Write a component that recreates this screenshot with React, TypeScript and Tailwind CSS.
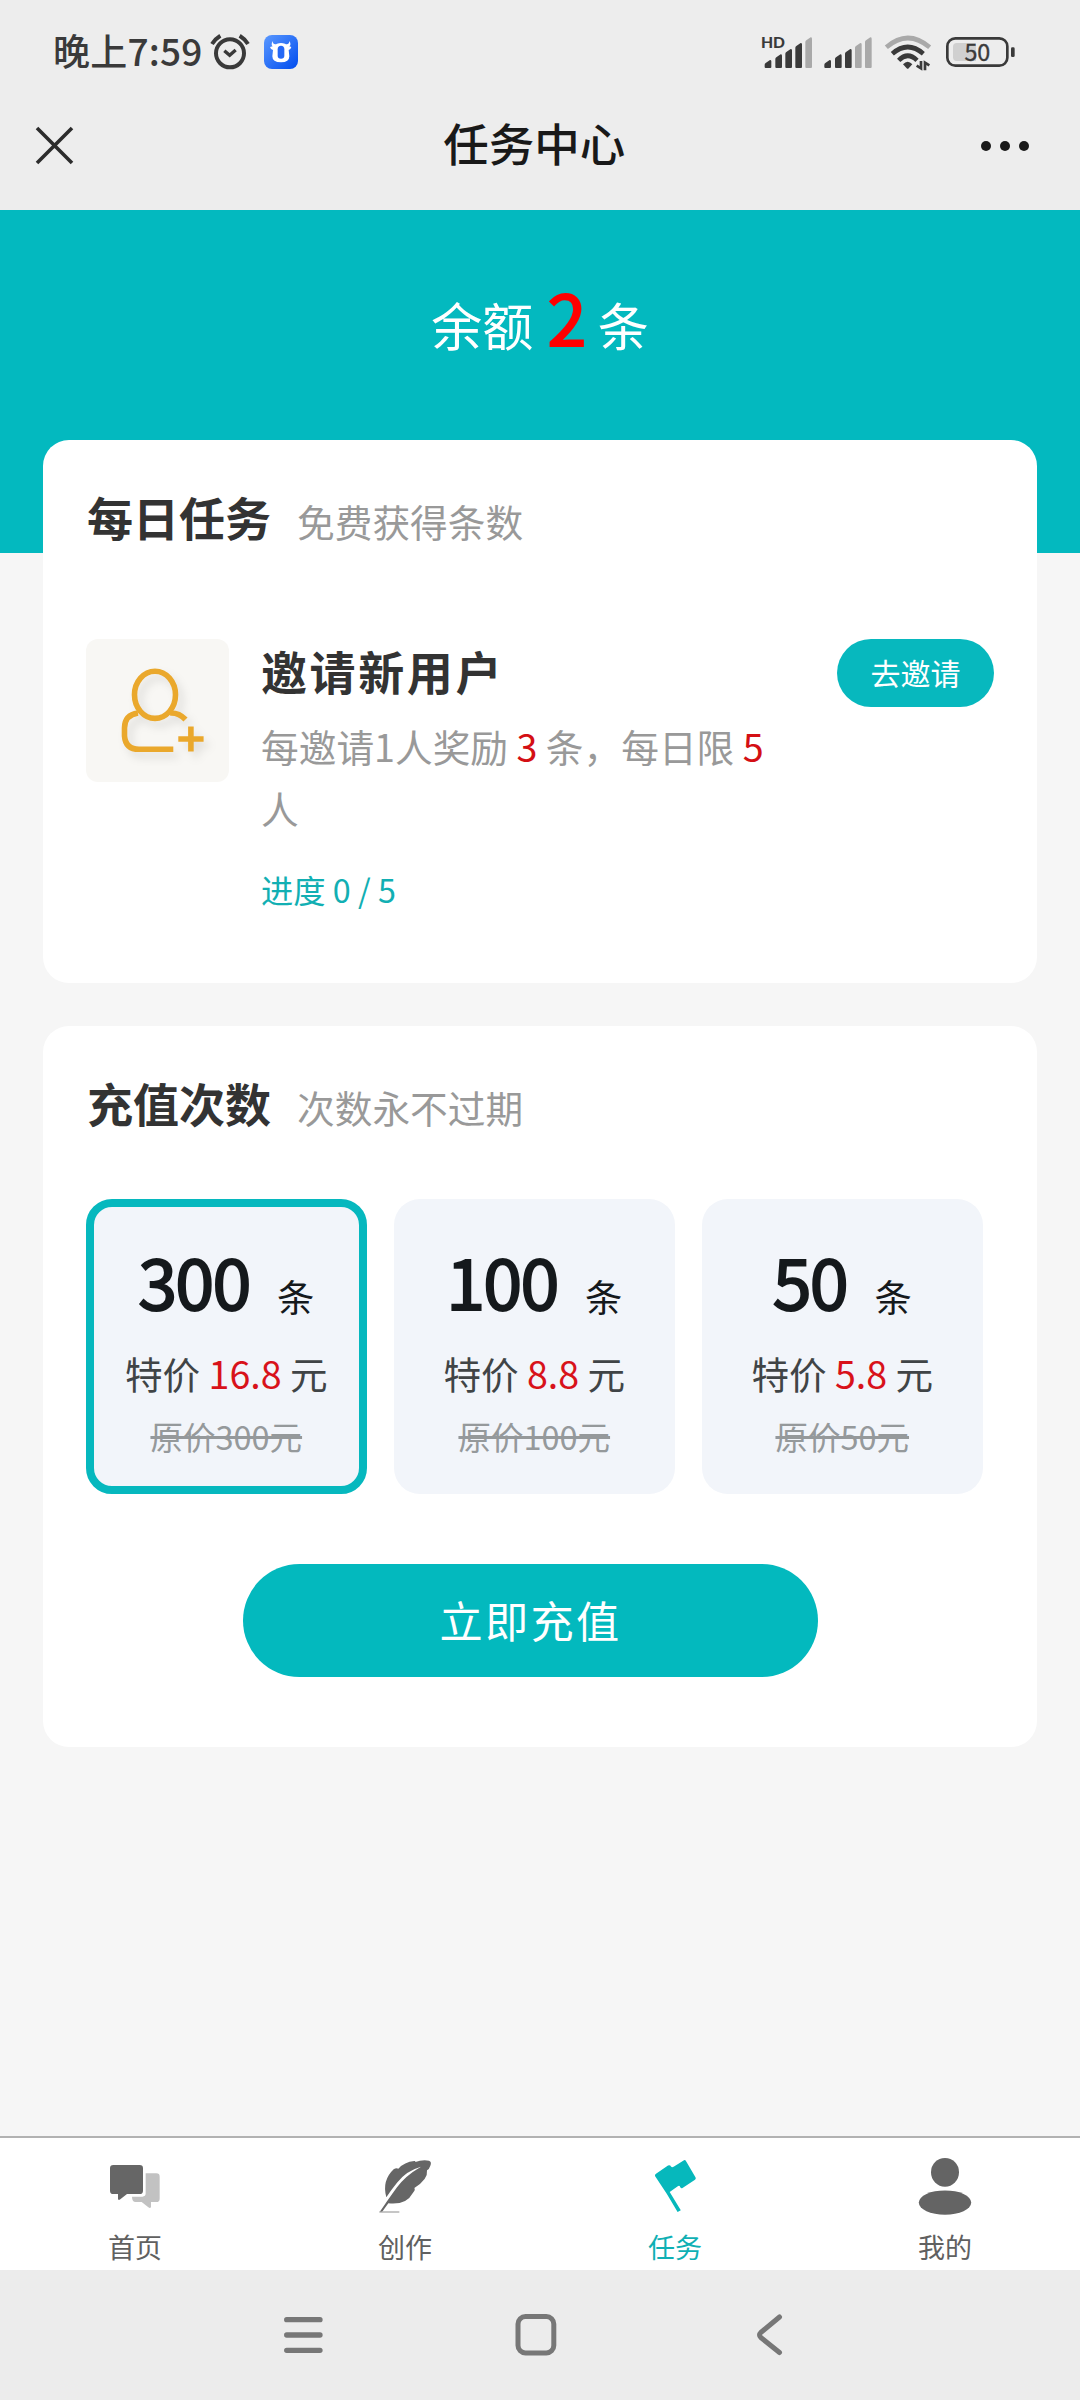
import React from "react";

const plans = [
  { count: "300", price: "16.8", original: "原价300元", selected: true },
  { count: "100", price: "8.8", original: "原价100元", selected: false },
  { count: "50", price: "5.8", original: "原价50元", selected: false },
];

function AlarmIcon() {
  return (
    <svg width="42" height="40" viewBox="0 0 126 120" fill="none" stroke="#3a3a3a" strokeWidth="12">
      <circle cx="63" cy="64" r="42" />
      <path d="M9 36 Q19 20 34 11M92 11 Q107 20 117 36" strokeWidth="12" />
      <path d="M46 56 L62 70 L80 54" strokeWidth="10" />
    </svg>
  );
}

function CowAppIcon() {
  return (
    <svg width="34" height="34" viewBox="0 0 102 102">
      <defs>
        <linearGradient id="cow" x1="0" y1="0" x2="1" y2="1">
          <stop offset="0" stopColor="#5a98ff" />
          <stop offset="1" stopColor="#004cee" />
        </linearGradient>
      </defs>
      <rect width="102" height="102" rx="24" fill="url(#cow)" />
      <path
        d="M26 18 C26 27 33 30 39 26 Q51 22 63 26 C69 30 76 27 76 18 C81 25 80 31 76 34 L82 36 Q80 44 74 45 L76 64 Q76 82 51 82 Q25 82 25 64 L27 45 Q20 44 18 36 L26 34 C22 31 22 25 26 18Z"
        fill="#fff"
      />
      <path d="M51 32 Q61 32 61 43 L61 62 Q61 71 51 71 Q41 71 41 62 L41 43 Q41 32 51 32Z" fill="#2468f5" />
    </svg>
  );
}

function SignalBars({ x, strong }: { x: number; strong: number }) {
  const bars = [
    [0, 180],
    [32, 163],
    [62, 147],
    [92, 129],
    [122, 112],
  ];
  return (
    <>
      {bars.map(([dx, top], i) => (
        <path
          key={dx}
          transform={`translate(${x + dx} 0)`}
          d={`M3 ${top + 9} L16 ${top} Q20 ${top} 20 ${top + 4} V201 Q20 204 17 204 H3 Q0 204 0 201 V${top + 14} Q0 ${top + 11} 3 ${top + 9}Z`}
          fill={i < strong ? "#3a3a3a" : "#a9a9a9"}
        />
      ))}
    </>
  );
}

function StatusIcons() {
  return (
    <svg width="257" height="42" viewBox="120 93 771 126" fill="none">
      <text x="123" y="143" fontSize="47" fontWeight="900" fill="#3a3a3a" fontFamily="Lato, 'Open Sans', sans-serif">
        HD
      </text>
      <SignalBars x={134} strong={4} />
      <SignalBars x={313} strong={3} />
      <path d="M499 142 Q563 86 629 142" stroke="#a9a9a9" strokeWidth="14" />
      <path d="M517 161 Q563 121 610 161" stroke="#3a3a3a" strokeWidth="14" />
      <path d="M536 181 Q563 154 591 181" stroke="#3a3a3a" strokeWidth="14" />
      <path d="M549 193 Q563 178 577 193 L566 205 Q563 208 560 205Z" fill="#3a3a3a" />
      <path d="M603 183 V205 L590 197 M615 211 V188 L628 196" stroke="#3a3a3a" strokeWidth="8" />
      <rect x="682" y="115" width="180" height="82" rx="24" stroke="#3a3a3a" strokeWidth="8" />
      <path d="M710 129 H768 V183 H710 Q699 183 699 172 V140 Q699 129 710 129Z" fill="#d0d0d0" />
      <rect x="873" y="142" width="11" height="29" rx="4" fill="#3a3a3a" />
      <text
        x="772"
        y="183"
        fontSize="70"
        fill="#3a3a3a"
        stroke="#3a3a3a"
        strokeWidth="1"
        textAnchor="middle"
        fontFamily="'Noto Sans CJK SC', sans-serif"
      >
        50
      </text>
    </svg>
  );
}

function InviteIcon() {
  return (
    <svg
      width="143"
      height="143"
      viewBox="0 0 143 143"
      fill="none"
      stroke="#eaa82c"
      strokeWidth="5.6"
      className="drop-shadow-[5px_6px_4px_rgba(0,0,0,0.1)]"
    >
      <ellipse cx="69" cy="55.8" rx="20.5" ry="23.6" />
      <path d="M52 74 Q38.5 76 38.5 89 V97 Q39.5 110.3 53 110.3 H87.3" />
      <path d="M84 74 Q93 73.5 99.5 80.5" />
      <path d="M92.3 100 H117.6 M104.9 87.4 V112.6" />
    </svg>
  );
}

function ChatIcon() {
  return (
    <svg width="56" height="60" viewBox="0 0 168 180">
      <path
        d="M116 52 H148 Q158 52 158 62 V128 Q158 138 148 138 H132 V153 Q130 158 124 154 L104 138 H86 Q75 138 75 122 H106 Q116 122 116 112Z"
        fill="#c2c2c2"
      />
      <path d="M19 27 H98 Q108 27 108 37 V104 Q108 114 98 114 H60 L38 131 Q33 133 33 128 V114 H19 Q9 114 9 104 V37 Q9 27 19 27Z" fill="#666" />
    </svg>
  );
}

function FeatherIcon() {
  return (
    <svg width="56" height="60" viewBox="0 0 168 180" fill="none">
      <path
        d="M8 168 L30 136 Q44 116 60 94 Q84 60 132 32 Q88 44 60 80 Q42 102 28 124 Q14 74 50 40 Q58 34 64 38 Q82 18 112 15 Q116 14 115 18 Q134 11 156 14 Q165 17 160 29 Q156 41 150 43 Q154 70 112 96 Q116 102 108 110 Q88 148 34 142 L15 168Z"
        fill="#666"
      />
      <path d="M7 168 H67" stroke="#aaa" strokeWidth="4" />
    </svg>
  );
}

function FlagIcon() {
  return (
    <svg width="56" height="60" viewBox="0 0 56 60">
      <path
        d="M8 20 Q7.6 18.6 9 17.7 L21 9.6 Q23 8.6 24 10.5 Q25 11.8 27 10.4 L37 4.2 Q38.2 3.7 38.8 4.8 L48.6 21.5 Q49.2 22.7 48 23.7 L35.5 32 Q34 32.8 33.2 31 Q32.5 29 30.8 30.2 L22.7 36 L33.8 54.3 L30.6 56 Q20.5 38 8 20Z"
        fill="#06b8bc"
      />
    </svg>
  );
}

function PersonIcon() {
  return (
    <svg width="56" height="60" viewBox="0 0 56 60" fill="#646464">
      <ellipse cx="28" cy="16.3" rx="14" ry="14.4" />
      <ellipse cx="28" cy="46.6" rx="26.2" ry="12.2" />
    </svg>
  );
}

const tabs = [
  { label: "首页", icon: <ChatIcon />, active: false },
  { label: "创作", icon: <FeatherIcon />, active: false },
  { label: "任务", icon: <FlagIcon />, active: true },
  { label: "我的", icon: <PersonIcon />, active: false },
];

function CardHeading({ title, note }: { title: string; note: string }) {
  return (
    <div className="flex h-[60px] items-start gap-[26px] pl-px">
      <h2 className="text-[46px] leading-[60px] font-bold text-[#333]">{title}</h2>
      <span className="text-[37.7px] leading-[69px] text-[#999]">{note}</span>
    </div>
  );
}

export default function App() {
  return (
    <div className="flex h-[2400px] w-[1080px] flex-col overflow-hidden bg-[#f6f6f6] font-['Noto_Sans_CJK_SC',sans-serif]">
      <header className="h-[210px] shrink-0 bg-[#ededed]">
        <div className="flex h-[100px] items-center justify-between pr-[63px] pl-[53px]">
          <div className="flex items-center">
            <span className="text-[37px] leading-[98px] font-medium tracking-[0.2px] text-[#3a3a3a]">晚上7:59</span>
            <div className="ml-[6px] flex items-center gap-[13px] pt-[4px]">
              <AlarmIcon />
              <CowAppIcon />
            </div>
          </div>
          <div className="pt-[4px]">
            <StatusIcons />
          </div>
        </div>
        <div className="flex h-[86px] items-center justify-between pr-[51px] pl-[35px]">
          <svg width="39" height="39" viewBox="0 0 39 39" className="mt-[5px]" stroke="#2c2c2c" strokeWidth="3.6">
            <path d="M2 2 L37 37 M37 2 L2 37" />
          </svg>
          <h1 className="-mt-[2px] ml-[14px] text-[45.5px] leading-[86px] font-medium text-[#191919]">任务中心</h1>
          <div className="mt-[5px] flex gap-[9.2px]">
            <i className="size-[10px] rounded-full bg-[#191919]" />
            <i className="size-[10px] rounded-full bg-[#191919]" />
            <i className="size-[10px] rounded-full bg-[#191919]" />
          </div>
        </div>
      </header>

      <main className="flex-1">
        <div className="h-[343px] bg-[#03b9bf] pt-[56px] text-center text-[51px] leading-[100px] text-white">
          余额 <span className="ml-[3px] text-[70px] text-[#f00] [-webkit-text-stroke:2px_#f00]">2</span> 条
        </div>

        <section className="mx-[43px] -mt-[113px] h-[543px] rounded-[26px] bg-white px-[43px] pt-[46px]">
          <CardHeading title="每日任务" note="免费获得条数" />
          <div className="mt-[93px] flex items-start">
            <div className="size-[143px] rounded-[12px] bg-[#f8f7f4]">
              <InviteIcon />
            </div>
            <div className="ml-[32px] w-[530px]">
              <h3 className="mt-[1px] text-[46px] leading-[60px] font-bold tracking-[2.6px] text-[#333]">邀请新用户</h3>
              <p className="mt-[14.5px] text-[37.7px] leading-[62.4px] text-[#999]">
                每邀请1人奖励 <span className="text-[#d40f14]">3</span> 条，每日限 <span className="text-[#d40f14]">5</span> 人
              </p>
              <p className="mt-[26px] text-[32.3px] leading-[48px] text-[#12afb3]">进度 0 / 5</p>
            </div>
            <button className="ml-auto h-[68px] w-[157px] rounded-full bg-[#07b8be] pb-[2px] text-[30px] leading-[66px] text-white">
              去邀请
            </button>
          </div>
        </section>

        <section className="mx-[43px] mt-[43px] h-[721px] rounded-[26px] bg-white px-[43px] pt-[46px]">
          <CardHeading title="充值次数" note="次数永不过期" />
          <div className="mt-[67px] flex gap-[27.5px]">
            {plans.map((plan) => (
              <div
                key={plan.count}
                className={`h-[295px] w-[280.5px] shrink-0 rounded-[26px] border-8 bg-[#f2f5fa] pt-[37px] text-center ${
                  plan.selected ? "border-[#06b8be]" : "border-transparent"
                }`}
              >
                <div className="flex h-[72px] items-start justify-center text-[#15191c]">
                  <span className="text-[70px] leading-[72px] tracking-[-1.7px] [-webkit-text-stroke:2px_#15191c]">{plan.count}</span>
                  <span className="mt-[32.5px] ml-[27.5px] text-[37.3px] leading-[38px]">条</span>
                </div>
                <p className="mt-[35px] text-[37.6px] leading-[44px] whitespace-nowrap text-[#404446]">
                  特价 <span className="text-[#d8121a]">{plan.price}</span> 元
                </p>
                <p className="mt-[21px] text-[32.5px] leading-[40px] text-[#95999b] line-through">{plan.original}</p>
              </div>
            ))}
          </div>
          <button className="mt-[70px] ml-[157px] h-[113px] w-[575px] rounded-full bg-[#03b9be] pb-[2px] text-[43.2px] leading-[111px] tracking-[2.3px] text-white">
            立即充值
          </button>
        </section>
      </main>

      <nav className="grid h-[134px] shrink-0 grid-cols-4 border-t-2 border-[#b2b2b2] bg-white">
        {tabs.map((tab) => (
          <div key={tab.label} className="flex flex-col items-center pt-[18px]">
            {tab.icon}
            <span className={`mt-[11px] text-[27px] leading-[40px] ${tab.active ? "text-[#0fb0b4]" : "text-[#606060]"}`}>
              {tab.label}
            </span>
          </div>
        ))}
      </nav>

      <footer className="flex h-[130px] shrink-0 items-start bg-[#ececec] pt-[43px] pl-[283px]">
        <svg width="40" height="44" viewBox="0 0 40 44" stroke="#777" strokeWidth="5.3" strokeLinecap="round">
          <path d="M3.7 6.7 H37 M3.7 22 H37 M3.7 37.3 H37" />
        </svg>
        <svg width="42" height="44" viewBox="0 0 42 44" fill="none" stroke="#777" strokeWidth="5" className="ml-[192px]">
          <rect x="3" y="3.5" width="35.8" height="36.5" rx="7.5" />
        </svg>
        <svg
          width="30"
          height="44"
          viewBox="0 0 30 44"
          fill="none"
          stroke="#777"
          strokeWidth="5"
          strokeLinecap="round"
          strokeLinejoin="round"
          className="ml-[199px]"
        >
          <path d="M23.5 4 L4.8 19.5 Q2.2 22 4.8 24.5 L23.5 39.5" />
        </svg>
      </footer>
    </div>
  );
}
